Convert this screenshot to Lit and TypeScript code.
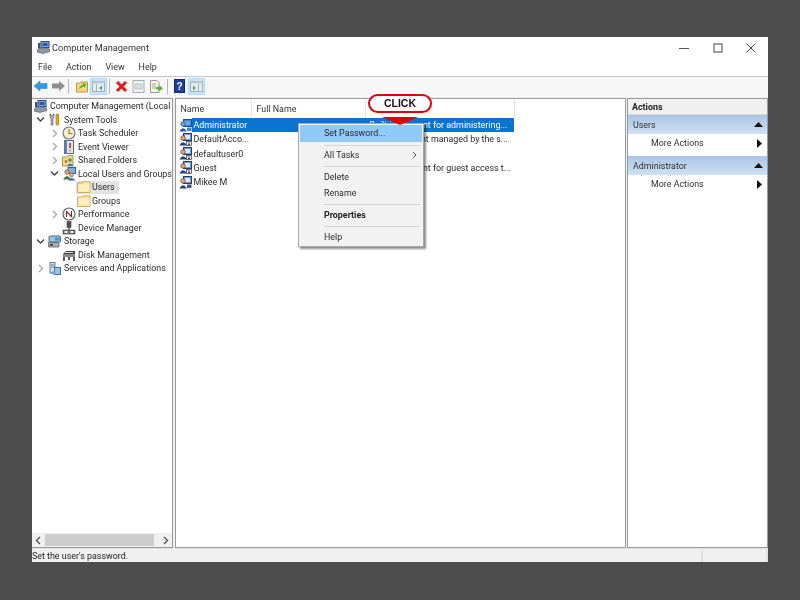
import { LitElement, html, css, svg } from "lit";
import { customElement } from "lit/decorators.js";

const s = (w: number, h: number, c: unknown, cls = "ic") =>
  html`<svg class=${cls} width=${w} height=${h} viewBox="0 0 ${w} ${h}">${c}</svg>`;

const mmc = () => s(13, 13, svg`
  <rect x="4" y="0.5" width="8" height="6" fill="#7fa6d8" stroke="#2c4a86"/>
  <rect x="5.5" y="2" width="5" height="3" fill="#2a58b8"/>
  <path d="M0 9 L5 6.5 L13 8 L13 10.5 L6 12.5 L0 11z" fill="#8c96a6" stroke="#4a5466" stroke-width=".6"/>
  <rect x="1" y="2" width="2.4" height="5.5" fill="#44506a"/>`);
const tools = () => s(13, 13, svg`
  <path d="M2 1 L2 4 L3 5 L3 12 L5 12 L5 5 L6 4 L6 1 L5 1 L5 3 L3 3 L3 1z" fill="#b0b6bc" stroke="#555" stroke-width=".6"/>
  <rect x="8" y="1" width="2.6" height="11" rx="1" fill="#e8b020" stroke="#7a5a10" stroke-width=".6"/>`);
const clock = () => s(14, 14, svg`
  <circle cx="7" cy="7" r="6" fill="#f2ecd8" stroke="#7a7a7a" stroke-width="1.2"/>
  <path d="M7 3 V7.5 H10.5" fill="none" stroke="#a07810" stroke-width="1.1"/>`);
const evt = () => s(14, 14, svg`
  <rect x="2.5" y="0.5" width="9" height="13" fill="#dfe4ee" stroke="#5a6a8a"/>
  <rect x="2.5" y="0.5" width="2.5" height="13" fill="#6a7ea8"/>
  <path d="M8 3 V8" stroke="#c02a20" stroke-width="1.6"/><circle cx="8" cy="10.5" r="1" fill="#e0a020"/>`);
const shared = () => s(14, 14, svg`
  <path d="M0.5 4 H5 L6 2.5 H11 V13 H0.5z" fill="#f0d890" stroke="#b09850"/>
  <circle cx="8" cy="7" r="1.8" fill="#4a9a50"/><path d="M5 13 Q8 8 11.5 13z" fill="#4a78b8"/>
  <circle cx="4" cy="8.5" r="1.4" fill="#d07040"/>`);
const users = () => s(14, 14, svg`
  <rect x="6" y="0.5" width="7.5" height="6" fill="#7fb0e0" stroke="#3a5a90"/>
  <circle cx="5" cy="5" r="2.4" fill="#d8a070" stroke="#7a5030" stroke-width=".5"/>
  <path d="M1 12.5 Q5 5.5 9 12.5z" fill="#3f7a48"/>
  <circle cx="9.5" cy="8" r="2" fill="#e0b080" stroke="#7a5030" stroke-width=".5"/>
  <path d="M6 13.5 Q9.5 8.5 13.5 13.5z" fill="#3a62b8"/>`);
const folder = () => s(14, 12, svg`
  <path d="M0.5 2 H5 L6 0.8 H13 V11.5 H0.5z" fill="#fbe39a" stroke="#d0b060"/>
  <rect x="1.5" y="3.5" width="11" height="7" fill="#fdf0bc"/>`, "ic fld");
const perf = () => s(14, 14, svg`
  <circle cx="7" cy="7" r="6" fill="#fff" stroke="#666" stroke-width="1.2"/>
  <path d="M4 4 L10 10" stroke="#c82020" stroke-width="1.4"/><path d="M4.5 10 V4.5 M9.5 9.5 V4" stroke="#3a3a3a" stroke-width="1"/>`);
const dev = () => s(14, 14, svg`
  <rect x="5" y="0.5" width="4" height="6" fill="#555" stroke="#222" stroke-width=".5"/>
  <path d="M1 9 H13 V13 H1z" fill="#777" stroke="#333" stroke-width=".6"/>
  <path d="M7 6 V9" stroke="#333"/><rect x="2.5" y="10" width="3" height="2" fill="#eee"/><rect x="8.5" y="10" width="3" height="2" fill="#eee"/>`);
const storage = () => s(13, 13, svg`
  <rect x="1" y="1" width="11.5" height="6" rx="1" fill="#9cc4dc" stroke="#4c6c84"/>
  <rect x="7" y="2.5" width="4.5" height="3" fill="#30a0d8"/>
  <path d="M0.5 7.5 H11 V12 H0.5z" fill="#a8acb0" stroke="#555" stroke-width=".7"/><rect x="2" y="9" width="3" height="1.6" fill="#3a3a3a"/>`);
const disk = () => s(14, 14, svg`
  <path d="M1 6 L4 3 H13 V6z" fill="#444"/><rect x="1" y="6" width="12" height="3" fill="#888"/>
  <path d="M2 9 V13 M7 9 V12 M12 9 V13" stroke="#333" stroke-width="1.6"/><rect x="3" y="4" width="8" height="1" fill="#ddd"/>`);
const svc = () => s(13, 13, svg`
  <rect x="2" y="0.5" width="5" height="10.5" fill="#d8e0e8" stroke="#6a7c90"/>
  <path d="M3 3 H6 M3 5 H6" stroke="#5080b0"/><rect x="6.5" y="5.5" width="6" height="7" fill="#9cc0e0" stroke="#4a7098"/>
  <rect x="3.5" y="9.5" width="4" height="3" fill="#7aa0c8"/>`);
const userIc = (arrow: boolean, on: boolean) => s(13, 13, svg`
  <rect x="4.5" y="0.5" width="8" height="7" fill=${on ? "#3f86d0" : "#6aa0d8"} stroke=${on ? "#1d4f96" : "#24406e"}/>
  <rect x="6" y="2" width="5" height="4" fill=${on ? "#70a8e0" : "#dfeaf5"}/>
  <circle cx="4" cy="5" r="2.3" fill=${on ? "#7a9cc8" : "#d8a880"} stroke=${on ? "#1d4f96" : "#4a3420"} stroke-width=".6"/>
  <path d="M0.3 12.5 Q4 5.8 8 12.5z" fill=${on ? "#1f5aa8" : "#27407a"}/>
  ${arrow
    ? svg`<rect x="7.5" y="8.5" width="5" height="4" fill="#fff" stroke="#333" stroke-width=".7"/>
          <path d="M10 9 V12 M8.8 10.8 L10 12 L11.2 10.8" fill="none" stroke="#222" stroke-width=".8"/>`
    : svg`<rect x="8" y="8.5" width="4.5" height="3.5" fill=${on ? "#3f86d0" : "#4a5a78"}/>`}`);
const chevR = () => html`<svg class="chev" width="7" height="9" viewBox="0 0 7 9"><path d="M2 1 L5.5 4.5 L2 8" fill="none" stroke="#a6a6a6" stroke-width="1.3"/></svg>`;
const chevD = () => html`<svg class="chev" width="9" height="9" viewBox="0 0 9 9"><path d="M1 2.5 L4.5 6 L8 2.5" fill="none" stroke="#404040" stroke-width="1.3"/></svg>`;

const tree: [number, string, string, () => unknown, string?][] = [
  [0, "", "Computer Management (Local", mmc],
  [1, "d", "System Tools", tools],
  [2, "r", "Task Scheduler", clock],
  [2, "r", "Event Viewer", evt],
  [2, "r", "Shared Folders", shared],
  [2, "d", "Local Users and Groups", users],
  [3, "", "Users", folder, "sel"],
  [3, "", "Groups", folder],
  [2, "r", "Performance", perf],
  [2, "", "Device Manager", dev],
  [1, "d", "Storage", storage],
  [2, "", "Disk Management", disk],
  [1, "r", "Services and Applications", svc],
];

const rows: [string, string, boolean, boolean][] = [
  ["Administrator", "Built-in account for administering...", true, false],
  ["DefaultAcco...", "A user account managed by the s...", false, true],
  ["defaultuser0", "", false, true],
  ["Guest", "Built-in account for guest access t...", false, true],
  ["Mikee M", "", false, false],
];

@customElement("app-root")
export class AppRoot extends LitElement {
  static styles = css`
    :host { display: block; width: 800px; height: 600px; background: #4d4d4d; font-family: Roboto, "Noto Sans", sans-serif; font-size: 8.9px; color: #2a2a2a; overflow: hidden; }
    .page { padding: 37px 32px 38px; height: 600px; box-sizing: border-box; }
    .win { height: 525px; background: #fff; display: flex; flex-direction: column; position: relative; filter: blur(0.35px); }
    .title { height: 21px; display: flex; align-items: center; padding-left: 5px; flex: none; font-size: 9.2px; color: #333; }
    .title .grow { flex: 1; }
    .wc { width: 33.5px; display: flex; justify-content: center; }
    .menu { height: 18px; flex: none; display: flex; align-items: center; border-bottom: 1px solid #c8c8c8; padding-left: 6px; gap: 14px; color: #333; }
    .tb { height: 20px; flex: none; background: #f7f7f7; display: flex; align-items: center; padding-bottom: 2px; box-sizing: border-box; }
    .tb .b { width: 17px; height: 17px; display: flex; align-items: center; justify-content: center; box-sizing: border-box; }
    .tb .on { background: #cce4f7; border: 1px solid #b6daf5; }
    .tb .sep { width: 1px; height: 15px; background: #b8b8b8; }
    .sep.a { margin: 0 4px 0 2px; }
    .sep.c { margin: 0 2.5px 0 2px; }
    .sep.d { margin: 0 3.5px 0 2px; }
    .spacer1 { width: 1px; }
    .panes { flex: 1; min-height: 0; background: #f0f0f0; display: grid; grid-template-columns: 141px 451px 141px; gap: 1.5px; padding-top: 1px; }
    .pane { background: #fff; border: 1px solid #9a9a9a; position: relative; min-height: 0; box-sizing: border-box; }
    .left { display: flex; flex-direction: column; border-left: none; }
    .tree { flex: 1; padding-top: 0.5px; overflow: hidden; }
    .tr { height: 13.5px; display: flex; align-items: center; white-space: nowrap; position: relative; }
    .arrowbox { width: 15px; flex: none; display: flex; justify-content: center; }
    .ic { flex: none; display: block; margin-right: 2px; }
    .l0 { padding-left: 2px; } .l0 .arrowbox { display: none; } .l0 .ic { margin-right: 3px; }
    .l1 { padding-left: 1px; } .l1 .ic { margin-right: 3px; }
    .l2 { padding-left: 15px; }
    .l3 { padding-left: 44px; }
    .l3 .arrowbox { display: none; }
    .l3 .cell { padding: 0 4px 0 1px; height: 13.5px; }
    .cell { display: flex; align-items: center; }
    .ic.fld { margin-right: 1px; }
    .sel .cell { background: #e2e2e2; }
    .sb { height: 14px; flex: none; background: #f0f0f0; display: flex; align-items: center; }
    .sb .a { width: 13px; display: flex; justify-content: center; }
    .sb .thumb { width: 109px; height: 12px; background: #cdcdcd; margin: 0 auto 0 0; }
    .hd { height: 19px; display: flex; align-items: stretch; color: #333; }
    .hd div { display: flex; align-items: center; padding-left: 5px; box-sizing: border-box; border-right: 1px solid #e5e5e5; }
    .c1 { width: 76px; } .c2 { width: 114px; } .c3 { width: 149px; }
    .row { height: 14.25px; display: flex; align-items: center; padding-left: 3px; white-space: nowrap; }
    .row .nm { width: 190px; display: flex; align-items: center; flex: none; }
    .row .ic { margin-right: 0; }
    .row .nmtx { flex: 1; height: 14px; line-height: 14px; padding-left: 2px; }
    .row .ds { width: 145px; flex: none; height: 14px; line-height: 14px; padding-left: 1px; box-sizing: border-box; }
    .row.on .nmtx, .row.on .ds { background: #0a74cf; color: #fff; }
    .act-h { height: 16px; padding: 1px 0 0 4px; background: #f0f0f0; font-weight: 700; display: flex; align-items: center; border-bottom: 1px solid #d5d5d5; box-sizing: border-box; color: #222; }
    .act-b { height: 19px; background: linear-gradient(#a9c5e4, #d0e0f2); display: flex; align-items: center; justify-content: space-between; padding: 0 4px 0 5px; color: #333; }
    .act-i { height: 22px; display: flex; align-items: center; justify-content: space-between; padding: 0 5px 4px 23px; box-sizing: border-box; color: #333; }
    .status { height: 14px; flex: none; background: #f0f0f0; display: flex; color: #222; border-top: 1px solid #e2e2e2; box-sizing: border-box; overflow: hidden; }
    .status .m { width: 671px; border-right: 2px solid #e2e2e2; line-height: 10px; padding-top: 2px; box-sizing: border-box; white-space: nowrap; }
    .status .n { flex: 1; border-right: 2px solid #e2e2e2; }

    .ctx { position: absolute; left: 266px; top: 86px; width: 126px; height: 124px; background: #f2f2f2; border: 1px solid #a8a8a8; box-shadow: 2px 2px 2px rgba(0,0,0,.45); box-sizing: border-box; padding: 1px; color: #2a2a2a; }
    .ctx .i { height: 16px; line-height: 16px; padding-left: 24px; display: flex; justify-content: space-between; }
    .ctx .hl { background: #91c9f7; height: 17px; line-height: 16px; }
    .ctx .s { height: 1px; background: #d4d4d4; margin: 0 2px 0 24px; }
    .ctx .b { font-weight: 700; color: #222; }
    .ctx .s.s1 { margin-top: 3px; margin-bottom: 1px; }
    .ctx .gap { height: 2.5px; }
    .ctx .chv { margin: 4px 5px 0 0; }
    .callout { position: absolute; left: 336px; top: 57px; width: 64px; height: 19px; box-sizing: border-box; background: #fff; border: 2px solid #e0000c; border-radius: 10px; color: #111; font-family: "Liberation Sans", sans-serif; font-weight: 700; font-size: 10.5px; text-align: center; line-height: 15px; }
    .tip { position: absolute; left: 350px; top: 80px; width: 36px; height: 8px; display: block; }
  `;

  render() {
    return html`<div class="page"><div class="win">
      <div class="title">${mmc()}<span>Computer Management</span><span class="grow"></span>
        <span class="wc"><svg width="10" height="10" viewBox="0 0 10 10"><path d="M0 5.5 H10" stroke="#555"/></svg></span>
        <span class="wc"><svg width="10" height="10" viewBox="0 0 10 10"><rect x="1" y="1" width="8" height="8" fill="none" stroke="#444"/></svg></span>
        <span class="wc"><svg width="10" height="10" viewBox="0 0 10 10"><path d="M.5 .5 L9.5 9.5 M9.5 .5 L.5 9.5" stroke="#444"/></svg></span>
      </div>
      <div class="menu"><span>File</span><span>Action</span><span>View</span><span>Help</span></div>
      <div class="tb">
        <span class="b"><svg width="14" height="12" viewBox="0 0 14 12"><path d="M0 6 L6 1 V3.5 H13 V8.5 H6 V11z" fill="#2f9fe0" stroke="#1a78c0" stroke-width=".5"/></svg></span>
        <span class="b"><svg width="14" height="12" viewBox="0 0 14 12"><path d="M14 6 L8 1 V3.5 H1 V8.5 H8 V11z" fill="#8e8e8e"/></svg></span>
        <span class="sep a"></span>
        <span class="b"><svg width="12" height="13" viewBox="0 0 12 13"><path d="M.5 3 H4 L5 2 H11.5 V12 H.5z" fill="#f2d680" stroke="#b89a50"/><path d="M3 9 Q4 5 7 5 L6 3 L10.5 4 L8.5 8 L7.8 6.5 Q6 7 3 9z" fill="#5ab52c"/></svg></span>
        <span class="b on"><svg width="13" height="11" viewBox="0 0 13 11"><rect x=".5" y=".5" width="12" height="10" fill="#e4edf3" stroke="#a4b2bc"/><rect x=".5" y=".5" width="12" height="2" fill="#bccad4"/><rect x="4" y="3" width="1" height="8" fill="#a4b2bc"/><path d="M10 4.5 L7 7 L10 9.5z" fill="#4aa66a"/></svg></span>
        <span class="sep c"></span>
        <span class="b"><svg width="13" height="13" viewBox="0 0 13 13"><path d="M2 2 L11 11 M11 2 L2 11" stroke="#dd1c1c" stroke-width="3"/></svg></span>
        <span class="b"><svg width="13" height="13" viewBox="0 0 13 13"><rect x="1" y=".5" width="11" height="12" fill="#f0f2f2" stroke="#a4aeb2"/><rect x="3" y="4" width="7" height="5" fill="#d8dee0" stroke="#a8b0b4" stroke-width=".6"/></svg></span>
        <span class="spacer1"></span>
        <span class="b"><svg width="13" height="13" viewBox="0 0 13 13"><path d="M.5 .5 H7 L9 2.5 V12.5 H.5z" fill="#f5f5ee" stroke="#9a9a90"/><path d="M2 4 H6 M2 6 H6 M2 8 H6" stroke="#b0a880"/><path d="M6 7 H9 V5 L13 8.2 L9 11.5 V9.5 H6z" fill="#5ab53c"/></svg></span>
        <span class="sep d"></span>
        <span class="b"><svg width="11" height="14" viewBox="0 0 11 14"><rect x=".5" y=".5" width="10" height="13" fill="#1f3f9f" stroke="#14286a"/><text x="5.5" y="11" text-anchor="middle" font-family="Liberation Sans" font-weight="700" font-size="10" fill="#fff">?</text></svg></span>
        <span class="b on"><svg width="13" height="11" viewBox="0 0 13 11"><rect x=".5" y=".5" width="12" height="10" fill="#e4edf3" stroke="#a4b2bc"/><rect x=".5" y=".5" width="12" height="2" fill="#bccad4"/><rect x="8" y="3" width="1" height="8" fill="#a4b2bc"/><path d="M3 4.5 L6 7 L3 9.5z" fill="#4aa66a"/></svg></span>
      </div>
      <div class="panes">
        <div class="pane left">
          <div class="tree">
            ${tree.map(([l, a, t, ic, c]) => html`<div class="tr l${l} ${c || ""}">
              <span class="arrowbox">${a === "d" ? chevD() : a === "r" ? chevR() : ""}</span>
              <span class="cell">${ic()}<span>${t}</span></span>
            </div>`)}
          </div>
          <div class="sb"><span class="a"><svg width="7" height="9" viewBox="0 0 7 9"><path d="M5 1 L1.5 4.5 L5 8" fill="none" stroke="#555" stroke-width="1.4"/></svg></span><span class="thumb"></span><span class="a"><svg width="7" height="9" viewBox="0 0 7 9"><path d="M2 1 L5.5 4.5 L2 8" fill="none" stroke="#555" stroke-width="1.4"/></svg></span></div>
        </div>
        <div class="pane">
          <div class="hd"><div class="c1">Name</div><div class="c2">Full Name</div><div class="c3"></div></div>
          <div class="list">
            ${rows.map(([n, d, on, arrow]) => html`<div class="row ${on ? "on" : ""}">
              <span class="nm">${userIc(arrow, on)}<span class="nmtx">${n}</span></span>
              <span class="ds">${d}</span>
            </div>`)}
          </div>
        </div>
        <div class="pane">
          <div class="act-h">Actions</div>
          <div class="act-b"><span>Users</span><svg width="9" height="5" viewBox="0 0 9 5"><path d="M0 5 L4.5 0 L9 5z" fill="#111"/></svg></div>
          <div class="act-i"><span>More Actions</span><svg width="5" height="9" viewBox="0 0 5 9"><path d="M0 0 L5 4.5 L0 9z" fill="#111"/></svg></div>
          <div class="act-b"><span>Administrator</span><svg width="9" height="5" viewBox="0 0 9 5"><path d="M0 5 L4.5 0 L9 5z" fill="#111"/></svg></div>
          <div class="act-i"><span>More Actions</span><svg width="5" height="9" viewBox="0 0 5 9"><path d="M0 0 L5 4.5 L0 9z" fill="#111"/></svg></div>
        </div>
      </div>
      <div class="status"><div class="m">Set the user's password.</div><div class="n"></div></div>

      <div class="ctx">
        <div class="i hl">Set Password...</div>
        <div class="s s1"></div>
        <div class="i">All Tasks<svg class="chv" width="5" height="8" viewBox="0 0 5 8"><path d="M1 1 L4 4 L1 7" fill="none" stroke="#555"/></svg></div>
        <div class="gap"></div><div class="s"></div><div class="gap"></div>
        <div class="i">Delete</div>
        <div class="i">Rename</div>
        <div class="gap"></div><div class="s"></div><div class="gap"></div>
        <div class="i b">Properties</div>
        <div class="gap"></div><div class="s"></div><div class="gap"></div>
        <div class="i">Help</div>
      </div>
      <div class="callout">CLICK</div>
      <svg class="tip" viewBox="0 0 36 8"><path d="M0 0 H36 L18 8z" fill="#e0000c"/></svg>
    </div></div>`;
  }
}
